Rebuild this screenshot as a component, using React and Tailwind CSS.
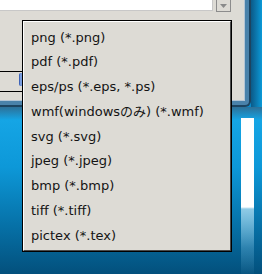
export default function App() {
  const items = [
    "png (*.png)",
    "pdf (*.pdf)",
    "eps/ps (*.eps, *.ps)",
    "wmf(windowsのみ) (*.wmf)",
    "svg (*.svg)",
    "jpeg (*.jpeg)",
    "bmp (*.bmp)",
    "tiff (*.tiff)",
    "pictex (*.tex)",
  ];
  return (
    <div className="relative w-[262px] h-[274px] overflow-hidden flex flex-col bg-[#0a88c8] font-['DejaVu_Sans','Noto_Sans_CJK_JP',sans-serif]">
      {/* top: window + desktop sliver */}
      <div className="flex h-[107px] shrink-0">
        <div className="w-[251px] h-full bg-[#1d4460] pr-[2px] pb-[2px] rounded-br-[6px]">
          <div className="h-full bg-[#4a82aa] pr-[4px] pb-[4px] rounded-br-[4px]">
            <div className="h-full bg-[#dddbd5] border-r border-b border-[#b4c6d6] flex flex-col">
              <div className="flex items-start h-[12px] shrink-0">
                <div className="w-[213px] h-[11px] bg-white border-b border-r border-[#c8c8c8]" />
                <div className="ml-[3px] w-[15px] h-[12px] bg-[#dddbd5] border-l border-r border-b border-[#8c8c8c] flex items-center justify-center">
                  <svg width="7" height="4" viewBox="0 0 7 4">
                    <polygon points="0,0 7,0 3.5,4" fill="#8a8a8a" />
                  </svg>
                </div>
              </div>
              <div className="mt-[59px] w-[60px] h-[21px] border-y border-black flex items-start">
                <div className="ml-[19px] mt-[1px] w-[3px] h-[13px] bg-[#7a9ee0] border-l border-[#3c62b8] rounded-l-[2px]" />
              </div>
            </div>
          </div>
        </div>
        <div className="flex-1 bg-gradient-to-r from-[#0b5a88] to-[#0a9ad8]" />
      </div>
      {/* desktop below */}
      <div className="flex-1 flex justify-end pr-[8px] pt-[11px] bg-[linear-gradient(to_bottom,#2d7098_0px,#15a5e5_13px,#0d98d8_60px,#0670a6_120px,#03507c_167px)]">
        <div className="w-[13px] h-[156px] bg-[linear-gradient(to_bottom,#ffffff_0px,#ffffff_89px,#8fcbe6_91px,rgba(120,190,225,0.35)_130px,rgba(120,190,225,0.05)_156px)]" />
      </div>
      {/* popup menu */}
      <div className="absolute left-[22px] top-[20px] w-[210px] h-[232px] border border-black">
        <div className="h-full bg-[#dddbd5] border border-l-white border-t-white border-r-[#4a4a4a] border-b-[#4a4a4a] flex flex-col pt-[3px]">
          {items.map((t) => (
            <div
              key={t}
              className="h-[24.75px] shrink-0 flex items-center pl-[7px] text-[13px] text-[#141414] whitespace-nowrap"
            >
              {t}
            </div>
          ))}
        </div>
      </div>
    </div>
  );
}
